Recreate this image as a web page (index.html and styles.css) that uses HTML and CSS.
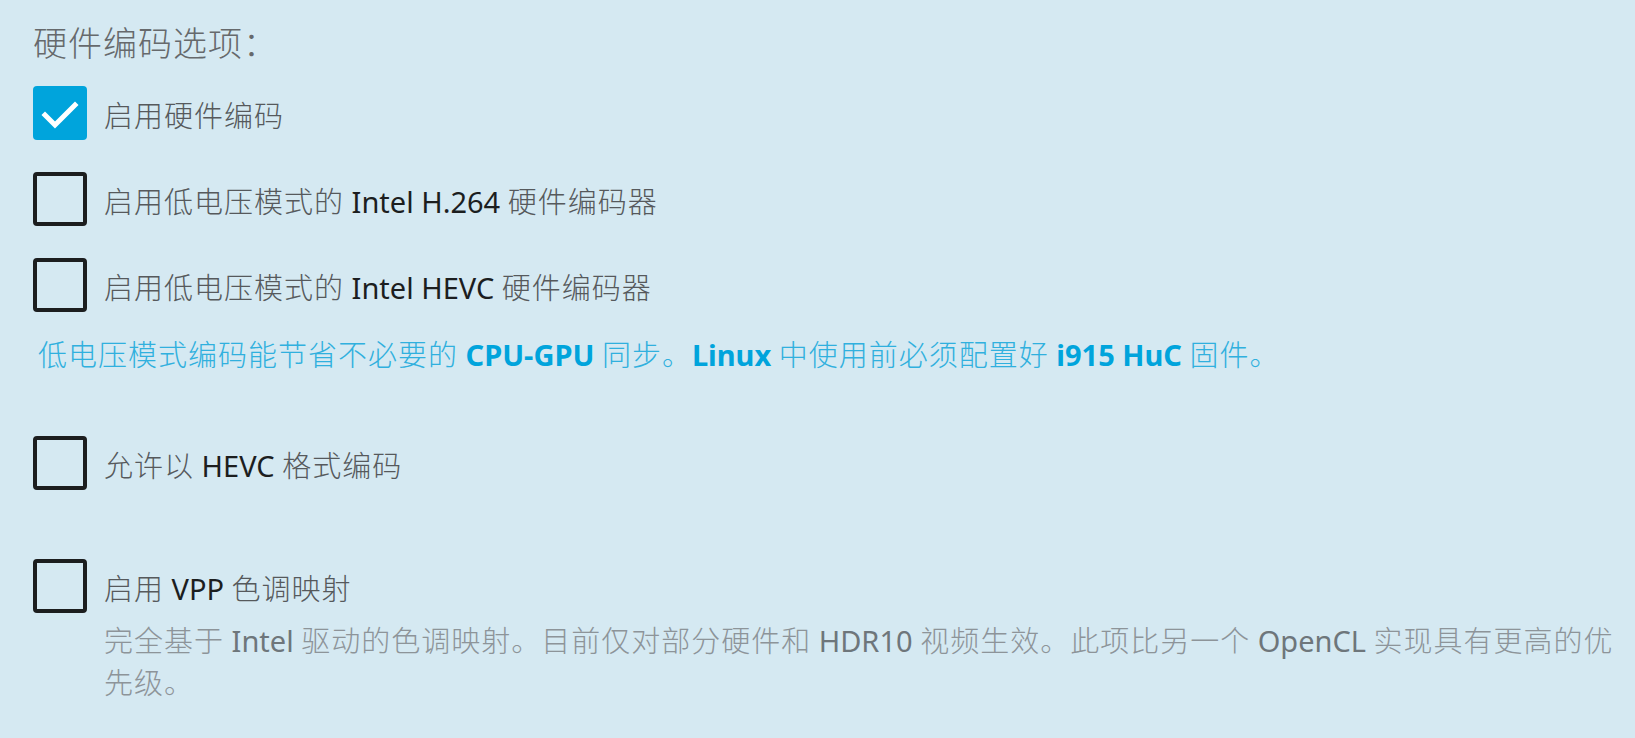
FILE: index.html
```html
<!DOCTYPE html>
<html lang="zh-CN">
<head>
<meta charset="utf-8">
<title>硬件编码选项</title>
<link rel="stylesheet" href="styles.css">
</head>
<body>
<div class="page">
  <h3 class="section-title"><span class="zh">硬件编码选项：</span></h3>

  <label class="check-row row-first">
    <span class="box checked">
      <svg viewBox="0 0 54 54" width="54" height="54"><polyline points="12,29 22,39 42,19" fill="none" stroke="#fff" stroke-width="5" stroke-linecap="square"/></svg>
    </span>
    <span class="label"><span class="zh">启用硬件编码</span></span>
  </label>

  <label class="check-row row-gap">
    <span class="box"></span>
    <span class="label"><span class="zh">启用低电压模式的</span> Intel H.264 <span class="zh">硬件编码器</span></span>
  </label>

  <label class="check-row row-gap">
    <span class="box"></span>
    <span class="label"><span class="zh">启用低电压模式的</span> Intel HEVC <span class="zh">硬件编码器</span></span>
  </label>

  <p class="note"><span class="zh">低电压模式编码能节省不必要的</span> <b>CPU-GPU</b> <span class="zh">同步。</span><b>Linux</b> <span class="zh">中使用前必须配置好</span> <b>i915 HuC</b> <span class="zh">固件。</span></p>

  <label class="check-row row-hevc">
    <span class="box"></span>
    <span class="label"><span class="zh">允许以</span> HEVC <span class="zh">格式编码</span></span>
  </label>

  <label class="check-row row-vpp">
    <span class="box"></span>
    <span class="label"><span class="zh">启用</span> VPP <span class="zh">色调映射</span></span>
  </label>
  <p class="desc"><span class="zh">完全基于</span> Intel <span class="zh">驱动的色调映射。目前仅对部分硬件和</span> HDR10 <span class="zh">视频生效。此项比另一个</span> OpenCL <span class="zh">实现具有更高的优</span><span class="zh">先级。</span></p>
</div>
</body>
</html>
```

FILE: styles.css
```css
html, body {
  margin: 0;
  padding: 0;
  background: #d5e9f2;
}

body {
  font-family: "Noto Sans", "Open Sans", "Noto Sans CJK SC", sans-serif;
  color: #1c1e1f;
}

.page {
  padding: 21px 20px 0 33px;
  display: flex;
  flex-direction: column;
}

.zh {
  font-weight: 300;
  letter-spacing: 1px;
}

.section-title {
  margin: 0;
  font-size: 34px;
  line-height: 44px;
  font-weight: 400;
  color: #66696c;
}

.check-row {
  display: flex;
  align-items: center;
  gap: 17px;
  height: 54px;
  font-size: 29px;
}

.row-first { margin-top: 21px; }
.row-gap { margin-top: 32px; }
.row-hevc { margin-top: 60px; }
.row-vpp { margin-top: 69px; }

.label {
  line-height: 42px;
  white-space: nowrap;
  position: relative;
  top: 3px;
}

.label .zh {
  color: #56595c;
}

.box {
  box-sizing: border-box;
  width: 54px;
  height: 54px;
  flex: none;
  border: 4px solid #1c1e1f;
  border-radius: 4px;
  display: flex;
}

.box.checked {
  border: none;
  background: #00a4dc;
}

.box svg {
  display: block;
}

.note {
  margin: 22px 0 0 5px;
  font-size: 29px;
  line-height: 42px;
  color: #00a4dc;
}

.note b {
  font-weight: 700;
}

.note .zh {
  color: #30b0de;
}

.desc {
  margin: 7px 0 0 71px;
  font-size: 29px;
  line-height: 42px;
  color: #6e767b;
}

.desc .zh {
  color: #8d9499;
}
```
